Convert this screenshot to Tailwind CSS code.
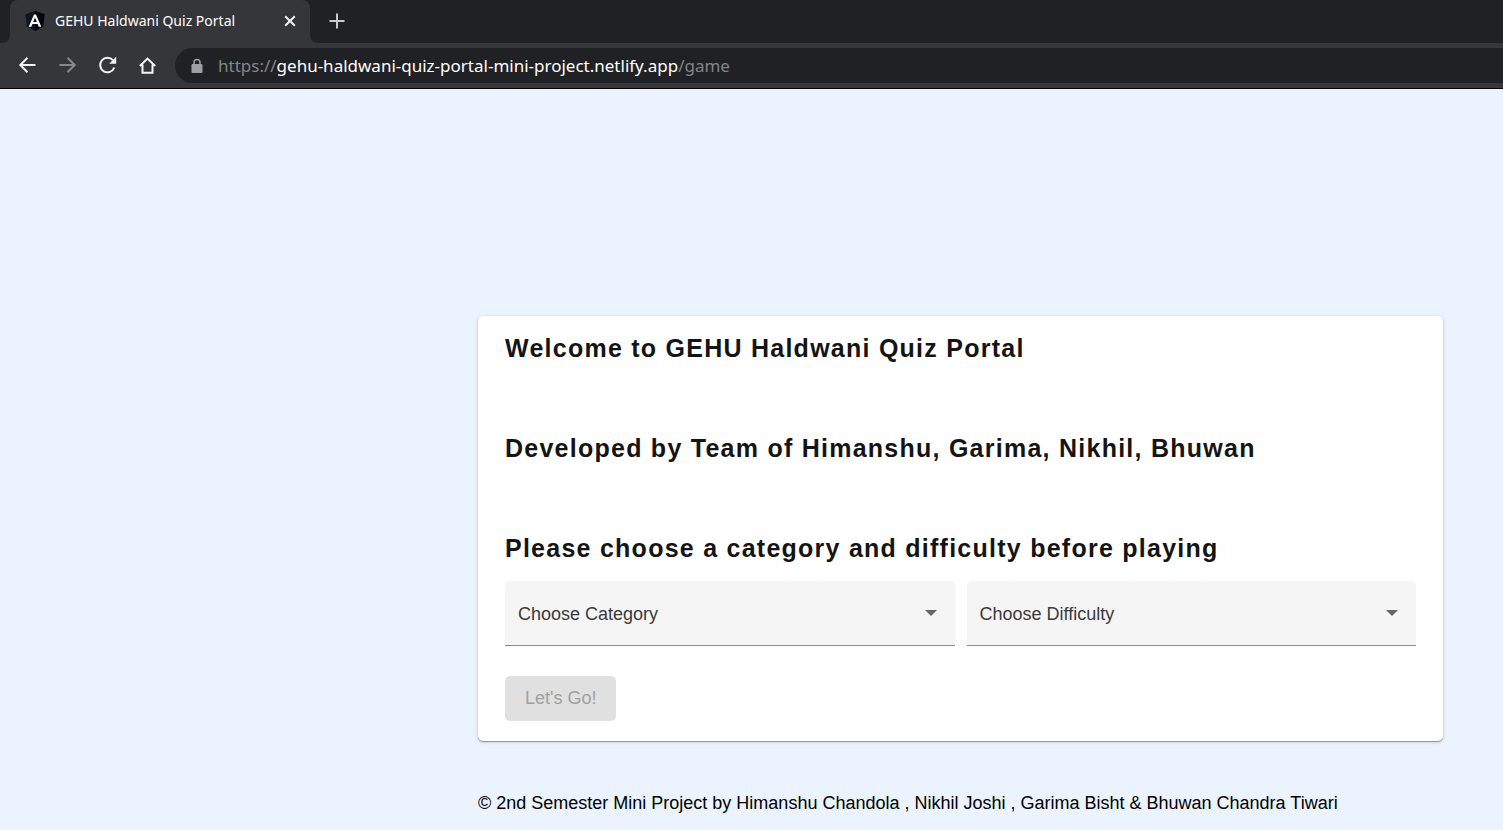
<!DOCTYPE html>
<html lang="en">
<head>
<meta charset="utf-8">
<meta name="viewport" content="width=device-width, initial-scale=1">
<title>GEHU Haldwani Quiz Portal</title>
<script src="https://cdn.jsdelivr.net/npm/@tailwindcss/browser@4"></script>
</head>
<body class="flex min-h-screen flex-col bg-[#ebf3ff] font-['Liberation_Sans',Arial,sans-serif] text-black">
  <!-- Browser chrome -->
  <header class="border-b border-black bg-[#35363a] font-['Noto_Sans',sans-serif]">
    <div class="flex h-[43px] bg-[#202124]">
      <div class="flex w-[10px] bg-[#35363a]"><div class="h-full w-full rounded-br-lg bg-[#202124]"></div></div>
      <div class="flex w-[300px] items-center rounded-t-lg bg-[#35363a] pr-3 pb-[2px] pl-[15px]">
        <svg class="h-5 w-5 shrink-0" viewBox="0 0 20 20" aria-hidden="true">
          <path d="M10 0 19.500 3.300 18.200 15.600 10 20 1.800 15.600.5 3.300Z" fill="#10151f"/>
          <path d="M10 0 19.500 3.300 18.200 15.600 10 20Z" fill="#03060d"/>
          <path fill-rule="evenodd" d="M9 3.400h2L16.300 15.800h-2.600l-1.100-2.900H7.400l-1.100 2.900H3.700L9 3.400Zm1 3L8.200 10.900h3.600L10 6.400Z" fill="#fff"/>
        </svg>
        <span class="ml-[10px] whitespace-nowrap text-[14px] leading-5 text-white">GEHU Haldwani Quiz Portal</span>
        <button type="button" aria-label="Close tab" class="ml-auto">
          <svg class="h-4 w-4" viewBox="0 0 16 16" fill="none" stroke="#f1f3f4" stroke-width="2" aria-hidden="true"><path d="m3.200 3.200 9.600 9.600M12.800 3.200l-9.600 9.600"/></svg>
        </button>
      </div>
      <div class="flex flex-1 bg-[#35363a]">
        <div class="flex flex-1 items-center rounded-bl-lg bg-[#202124] pb-px pl-[19px]">
          <button type="button" aria-label="New tab">
            <svg class="h-4 w-4" viewBox="0 0 16 16" fill="none" stroke="#c8cacd" stroke-width="2" aria-hidden="true"><path d="M8 .5v15M.5 8h15"/></svg>
          </button>
        </div>
      </div>
    </div>
    <nav class="flex h-[45px] items-center pl-[17px]" aria-label="Browser toolbar">
      <div class="flex gap-5 pb-px">
        <button type="button" aria-label="Back"><svg class="h-5 w-5" viewBox="0 0 20 20" fill="none" stroke="#f1f3f4" stroke-width="2" aria-hidden="true"><path d="M18.500 10H3.500M10.500 2.800 3.300 10l7.200 7.200"/></svg></button>
        <button type="button" aria-label="Forward"><svg class="h-5 w-5" viewBox="0 0 20 20" fill="none" stroke="#86888b" stroke-width="2" aria-hidden="true"><path d="M2.500 10h14.500M10.500 2.800l7.200 7.200-7.200 7.200"/></svg></button>
        <button type="button" aria-label="Reload"><svg class="h-5 w-5" viewBox="0 0 20 20" fill="none" aria-hidden="true"><path d="M17.300 12.500A7.300 7.300 0 1 1 16 5.200" stroke="#f1f3f4" stroke-width="2"/><path d="M19.200 1.800v7h-7Z" fill="#f1f3f4"/></svg></button>
        <button type="button" aria-label="Home"><svg class="h-5 w-5" viewBox="0 0 20 20" fill="none" stroke="#f1f3f4" stroke-width="2" aria-hidden="true"><path d="M2.900 11 10.500 3.600l7.600 7.400M5.500 9.500v8.200h10V9.500"/></svg></button>
      </div>
      <div class="ml-[18px] flex h-[35px] flex-1 items-center rounded-l-full bg-[#202124] pl-4">
        <svg class="h-4 w-3 shrink-0" viewBox="0 0 12 16" aria-hidden="true"><rect x=".5" y="6" width="11" height="9" rx="1.200" fill="#9aa0a6"/><path d="M3 7V4.500a3 3 0 0 1 6 0V7" fill="none" stroke="#9aa0a6" stroke-width="1.500"/></svg>
        <a href="#" class="ml-[15px] whitespace-nowrap text-[17px] leading-6 text-[#80868b]">https://<span class="text-white">gehu-haldwani-quiz-portal-mini-project.netlify.app</span>/game</a>
      </div>
    </nav>
  </header>

  <!-- Quiz setup -->
  <main class="flex-1 pt-[227px] pr-[60px] pl-[478px]">
    <form class="rounded-[5px] bg-white px-[27px] pt-4 pb-5 shadow-[0_1px_1px_rgba(0,0,0,0.35),0_1px_4px_rgba(0,0,0,0.14)]">
      <div class="space-y-[68px] text-[25px] leading-8 font-bold tracking-wider text-[#141414]">
        <h1>Welcome to GEHU Haldwani Quiz Portal</h1>
        <h2>Developed by Team of Himanshu, Garima, Nikhil, Bhuwan</h2>
        <h2>Please choose a category and difficulty before playing</h2>
      </div>
      <div class="mt-[17px] grid grid-cols-2 gap-3 text-[18px] leading-6">
        <div class="relative">
          <select id="category" class="block h-[65px] w-full appearance-none rounded-t-[5px] border-b border-[#8a8a8a] bg-[#f5f5f5] px-[13px]">
            <option value=""></option>
          </select>
          <label for="category" class="pointer-events-none absolute inset-y-0 left-[13px] flex items-center text-[#3a3a3a]">Choose Category</label>
          <svg class="pointer-events-none absolute top-[29px] right-[18px] h-[6px] w-3" viewBox="0 0 12 6" aria-hidden="true"><path d="M0 0h12L6 6Z" fill="#666"/></svg>
        </div>
        <div class="relative">
          <select id="difficulty" class="block h-[65px] w-full appearance-none rounded-t-[5px] border-b border-[#8a8a8a] bg-[#f5f5f5] px-[13px]">
            <option value=""></option>
          </select>
          <label for="difficulty" class="pointer-events-none absolute inset-y-0 left-[13px] flex items-center text-[#3a3a3a]">Choose Difficulty</label>
          <svg class="pointer-events-none absolute top-[29px] right-[18px] h-[6px] w-3" viewBox="0 0 12 6" aria-hidden="true"><path d="M0 0h12L6 6Z" fill="#666"/></svg>
        </div>
      </div>
      <button type="submit" disabled class="mt-[30px] block h-[45px] rounded-[5px] bg-[#e0e0e0] px-5 text-[18px] text-[#a0a0a0]">Let's Go!</button>
    </form>
    <footer class="mt-[50px] pb-3 text-[18px] leading-6">© 2nd Semester Mini Project by Himanshu Chandola , Nikhil Joshi , Garima Bisht &amp; Bhuwan Chandra Tiwari</footer>
  </main>
</body>
</html>
